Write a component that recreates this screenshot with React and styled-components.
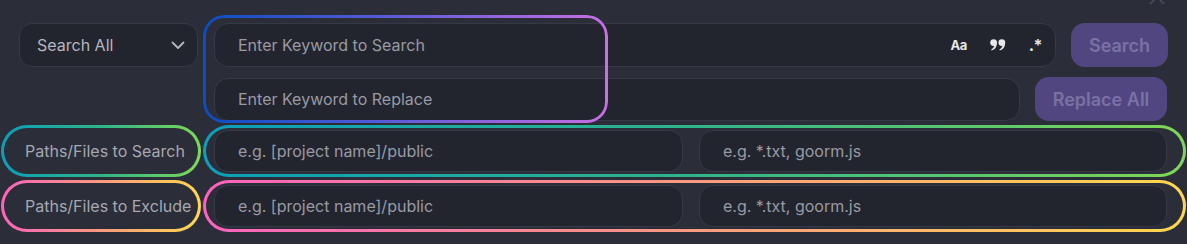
import styled, { createGlobalStyle } from "styled-components";

const GlobalStyle = createGlobalStyle`
  html, body {
    margin: 0;
    padding: 0;
    background: #2b2d39;
    font-family: Inter, "Noto Sans", sans-serif;
  }
`;

const Panel = styled.div`
  position: relative;
  width: 1187px;
  height: 244px;
  background: #2b2d39;
  padding-top: 23px;
  box-sizing: border-box;
  overflow: hidden;
`;

const CollapseIcon = styled.svg`
  position: absolute;
  top: -6px;
  left: 1148px;
`;

const TopBlock = styled.div`
  position: relative;
  display: flex;
  flex-direction: column;
  gap: 10px;
`;

const Row = styled.div`
  display: flex;
  align-items: center;
  gap: ${(p) => p.$gap || 15}px;
`;

const Select = styled.div`
  width: 179px;
  height: 44px;
  box-sizing: border-box;
  margin-left: 19px;
  margin-right: 1px;
  border: 1px solid #363946;
  border-radius: 13px;
  background: #23252e;
  display: flex;
  align-items: center;
  justify-content: space-between;
  padding: 0 11px 0 17px;
  color: #b4b6bf;
  font-size: 16px;
`;

const Spacer = styled.div`
  width: 199px;
`;

const Field = styled.div`
  width: ${(p) => p.$w}px;
  height: ${(p) => p.$h || 44}px;
  box-sizing: border-box;
  border: 1px solid #363946;
  border-radius: 14px;
  background: #23252e;
  display: flex;
  align-items: center;
  padding: 0 12px 0 23px;
  color: #989aa5;
  font-size: 16px;
`;

const Placeholder = styled.span`
  flex: 1;
  white-space: nowrap;
`;

const Toggles = styled.div`
  display: flex;
  align-items: center;
  gap: 23px;
  color: #e6e7ea;
  font-weight: 700;
  margin-right: 1px;
`;

const Toggle = styled.span`
  font-size: ${(p) => p.$size || 12}px;
  letter-spacing: -0.5px;
  display: flex;
  align-items: center;
`;

const Button = styled.div`
  width: ${(p) => p.$w}px;
  height: 44px;
  box-sizing: border-box;
  border-radius: 14px;
  background: #524681;
  color: #7a72a3;
  font-size: 18px;
  font-weight: 600;
  display: flex;
  align-items: center;
  justify-content: center;
`;

const Highlight = styled.div`
  position: absolute;
  left: 203px;
  top: -8px;
  width: 405px;
  height: 108px;
  box-sizing: border-box;
  border: 3px solid transparent;
  border-radius: 21px;
  background: linear-gradient(90deg, #0b4ec2 0%, #5a5bd6 45%, #c96fe2 100%) border-box;
  -webkit-mask: linear-gradient(#000 0 0) padding-box, linear-gradient(#000 0 0);
  -webkit-mask-composite: xor;
  mask-composite: exclude;
  pointer-events: none;
`;

const PathRows = styled.div`
  display: flex;
  flex-direction: column;
  gap: 3px;
  margin-top: 4px;
  padding-left: 1px;
`;

const PathRow = styled.div`
  display: flex;
  gap: 2px;
`;

const Outline = styled.div`
  height: 52px;
  box-sizing: border-box;
  border: 3px solid transparent;
  border-radius: 26px;
  background:
    linear-gradient(#2b2d39, #2b2d39) padding-box,
    ${(p) => p.$grad} border-box;
  display: flex;
  align-items: center;
`;

const LabelBox = styled(Outline)`
  width: 200px;
  padding-left: 21px;
  color: #a6a8b1;
  font-size: 16px;
  white-space: nowrap;
`;

const InputsBox = styled(Outline)`
  width: 983px;
  padding: 0 16px 0 8px;
  gap: 16px;
`;

const teal = "linear-gradient(90deg, #0b9fba 0%, #2fb58a 50%, #7fd857 100%)";
const warm = "linear-gradient(90deg, #ff62bd 0%, #ff9a80 50%, #ffd84e 100%)";

const Quote = () => (
  <svg width="16" height="12" viewBox="0 0 16 12">
    <g fill="#e6e7ea">
      <circle cx="3.6" cy="3.6" r="3.4" />
      <path d="M6.9 4 C6.9 8 5 10.5 1.6 11.6 L1.2 10.4 C3.4 9.4 4.4 7.8 4.4 5.6 Z" />
      <circle cx="11.8" cy="3.6" r="3.4" />
      <path d="M15.1 4 C15.1 8 13.2 10.5 9.8 11.6 L9.4 10.4 C11.6 9.4 12.6 7.8 12.6 5.6 Z" />
    </g>
  </svg>
);

const PathInputs = () => (
  <>
    <Field $w={470} $h={42}>
      <Placeholder>e.g. [project name]/public</Placeholder>
    </Field>
    <Field $w={469} $h={42}>
      <Placeholder>e.g. *.txt, goorm.js</Placeholder>
    </Field>
  </>
);

export default function App() {
  return (
    <>
      <GlobalStyle />
      <Panel>
        <CollapseIcon width="18" height="12" viewBox="0 0 18 12">
          <path d="M2 10 L9 3 L16 10" fill="none" stroke="#4a4d5b" strokeWidth="1.6" />
        </CollapseIcon>
        <TopBlock>
          <Row>
            <Select>
              <span>Search All</span>
              <svg width="16" height="16" viewBox="0 0 16 16">
                <path d="M2.5 5.5 L8 11 L13.5 5.5" fill="none" stroke="#b4b6bf" strokeWidth="1.8" strokeLinecap="round" strokeLinejoin="round" />
              </svg>
            </Select>
            <Field $w={842}>
              <Placeholder>Enter Keyword to Search</Placeholder>
              <Toggles>
                <Toggle $size={13}>Aa</Toggle>
                <Toggle><Quote /></Toggle>
                <Toggle $size={16}>.*</Toggle>
              </Toggles>
            </Field>
            <Button $w={97}>Search</Button>
          </Row>
          <Row>
            <Spacer />
            <Field $w={806} $h={43}>
              <Placeholder>Enter Keyword to Replace</Placeholder>
            </Field>
            <Button $w={132}>Replace All</Button>
          </Row>
          <Highlight />
        </TopBlock>
        <PathRows>
          <PathRow>
            <LabelBox $grad={teal}>Paths/Files to Search</LabelBox>
            <InputsBox $grad={teal}>
              <PathInputs />
            </InputsBox>
          </PathRow>
          <PathRow>
            <LabelBox $grad={warm}>Paths/Files to Exclude</LabelBox>
            <InputsBox $grad={warm}>
              <PathInputs />
            </InputsBox>
          </PathRow>
        </PathRows>
      </Panel>
    </>
  );
}
